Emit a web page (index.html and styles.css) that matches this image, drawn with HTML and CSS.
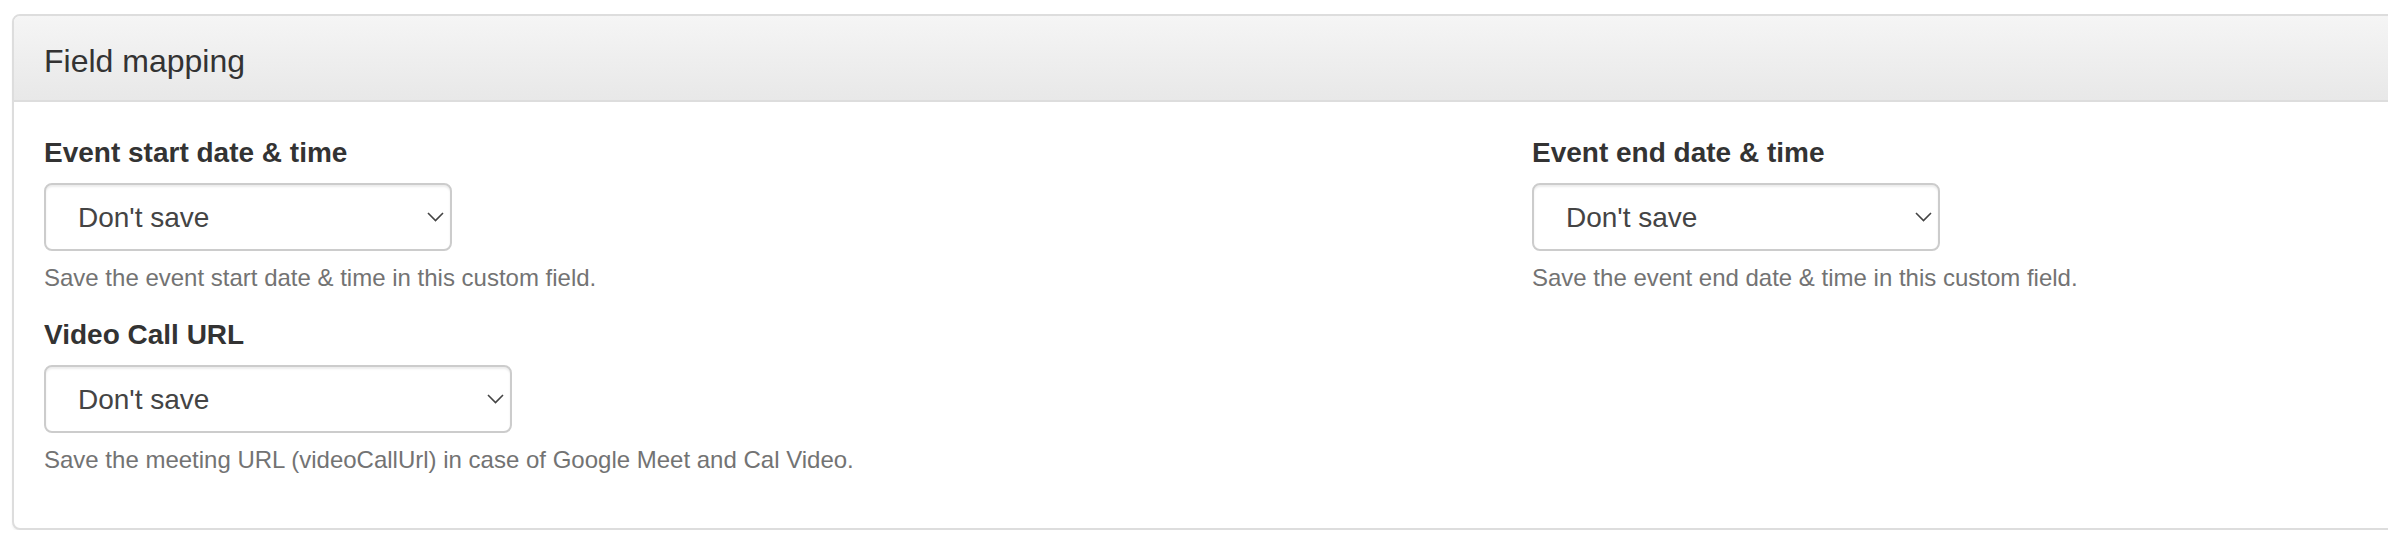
FILE: index.html
```html
<!DOCTYPE html>
<html lang="en">
<head>
<meta charset="utf-8">
<title>Field mapping</title>
<link rel="stylesheet" href="styles.css">
</head>
<body>
<div class="page">
  <div class="panel">
    <div class="panel-heading">
      <h3 class="panel-title">Field mapping</h3>
    </div>
    <div class="panel-body">
      <div class="field-grid">
        <div class="form-group">
          <label class="field-label" for="start">Event start date &amp; time</label>
          <div class="select-wrap select-md">
            <select id="start" class="form-control"><option>Don't save</option></select>
            <svg class="chevron" width="17" height="10" viewBox="0 0 17 10" aria-hidden="true"><path d="M1 1 L8.5 8.5 L16 1" fill="none" stroke="#444" stroke-width="1.6"/></svg>
          </div>
          <p class="help-block">Save the event start date &amp; time in this custom field.</p>
        </div>
        <div class="form-group">
          <label class="field-label" for="end">Event end date &amp; time</label>
          <div class="select-wrap select-md">
            <select id="end" class="form-control"><option>Don't save</option></select>
            <svg class="chevron" width="17" height="10" viewBox="0 0 17 10" aria-hidden="true"><path d="M1 1 L8.5 8.5 L16 1" fill="none" stroke="#444" stroke-width="1.6"/></svg>
          </div>
          <p class="help-block">Save the event end date &amp; time in this custom field.</p>
        </div>
        <div class="form-group">
          <label class="field-label" for="video">Video Call URL</label>
          <div class="select-wrap select-lg">
            <select id="video" class="form-control"><option>Don't save</option></select>
            <svg class="chevron" width="17" height="10" viewBox="0 0 17 10" aria-hidden="true"><path d="M1 1 L8.5 8.5 L16 1" fill="none" stroke="#444" stroke-width="1.6"/></svg>
          </div>
          <p class="help-block">Save the meeting URL (videoCallUrl) in case of Google Meet and Cal Video.</p>
        </div>
      </div>
    </div>
  </div>
</div>
</body>
</html>
```
FILE: styles.css
```css
html, body {
  margin: 0;
  padding: 0;
  background: #fff;
  overflow: hidden;
}

body {
  font-family: "Liberation Sans", Arial, Helvetica, sans-serif;
  color: #333;
}

.page {
  padding: 14px 0 0 12px;
}

.panel {
  width: 3100px;
  border: 2px solid #ddd;
  border-radius: 8px;
  background: #fff;
  box-shadow: 0 2px 2px rgba(0, 0, 0, 0.05);
  overflow: hidden;
}

.panel-heading {
  padding: 25px 30px 19px;
  background: linear-gradient(to bottom, #f5f5f5 0%, #e8e8e8 100%);
  border-bottom: 2px solid #ddd;
}

.panel-title {
  margin: 0;
  font-size: 32px;
  font-weight: normal;
  line-height: 40px;
  color: #333;
}

.panel-body {
  padding: 31px 30px 50px;
}

.field-grid {
  display: grid;
  grid-template-columns: 1488px 1488px;
  row-gap: 20px;
}

.form-group {
  display: flex;
  flex-direction: column;
  align-items: flex-start;
}

.field-label {
  display: block;
  font-size: 28px;
  font-weight: bold;
  line-height: 40px;
  margin-bottom: 10px;
  color: #333;
}

.select-wrap {
  position: relative;
  height: 68px;
}

.select-md { width: 408px; }
.select-lg { width: 468px; }

.form-control {
  appearance: none;
  -webkit-appearance: none;
  box-sizing: border-box;
  width: 100%;
  height: 68px;
  margin: 0;
  padding: 0 40px 0 32px;
  font-family: "Liberation Sans", Arial, Helvetica, sans-serif;
  font-size: 28px;
  color: #444;
  background: #fff;
  border: 2px solid #ccc;
  border-radius: 8px;
  box-shadow: inset 0 2px 2px rgba(0, 0, 0, 0.075);
}

.chevron {
  position: absolute;
  right: 8px;
  top: 29px;
}

.help-block {
  margin: 10px 0 0;
  font-size: 24px;
  line-height: 34.3px;
  color: #737373;
}
```
